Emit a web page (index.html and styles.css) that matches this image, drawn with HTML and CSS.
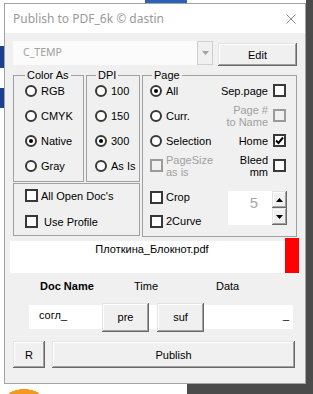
FILE: index.html
```html
<!DOCTYPE html>
<html lang="en">
<head>
<meta charset="UTF-8">
<title>Publish to PDF_6k</title>
<link rel="stylesheet" href="styles.css">
</head>
<body>
<div class="window">
  <div class="titlebar">
    <span class="title">Publish to PDF_6k © dastin</span>
    <svg class="close" width="10" height="10" viewBox="0 0 10 10"><path d="M0.5 0.5L9.5 9.5M9.5 0.5L0.5 9.5" stroke="#8a8a8a" stroke-width="1"/></svg>
  </div>

  <div class="content">
    <div class="top-row">
      <div class="combo">
        <span class="combo-text">C_TEMP</span>
        <span class="combo-btn"><svg width="7" height="4" viewBox="0 0 7 4"><path d="M0 0H7L3.5 4Z" fill="#a0a0a0"/></svg></span>
      </div>
      <button class="btn edit">Edit</button>
    </div>

    <div class="main">
      <div class="left-col">
        <div class="group-row">
          <fieldset class="group color-group">
            <legend>Color As</legend>
            <div class="opt-list">
              <div class="opt"><span class="radio"></span>RGB</div>
              <div class="opt"><span class="radio"></span>CMYK</div>
              <div class="opt"><span class="radio on"></span>Native</div>
              <div class="opt"><span class="radio"></span>Gray</div>
            </div>
          </fieldset>
          <fieldset class="group dpi-group">
            <legend>DPI</legend>
            <div class="opt-list">
              <div class="opt"><span class="radio"></span>100</div>
              <div class="opt"><span class="radio"></span>150</div>
              <div class="opt"><span class="radio on"></span>300</div>
              <div class="opt"><span class="radio"></span>As Is</div>
            </div>
          </fieldset>
        </div>
        <div class="box">
          <div class="opt chk"><span class="check"></span>All Open Doc's</div>
          <div class="opt chk"><span class="check"></span><span class="pre-space"> Use Profile</span></div>
        </div>
      </div>

      <fieldset class="group page-group">
        <legend>Page</legend>
        <div class="opt-list">
          <div class="page-row">
            <div class="opt"><span class="radio on"></span>All</div>
            <div class="right-opt"><span>Sep.page</span><span class="check"></span></div>
          </div>
          <div class="page-row">
            <div class="opt"><span class="radio"></span>Curr.</div>
            <div class="right-opt off"><span class="two-line">Page #<br>to Name</span><span class="check"></span></div>
          </div>
          <div class="page-row">
            <div class="opt"><span class="radio"></span>Selection</div>
            <div class="right-opt"><span>Home</span><span class="check"><svg width="9" height="9" viewBox="0 0 9 9"><path d="M1 4.5L3.5 7L8 1.5" fill="none" stroke="#000" stroke-width="2"/></svg></span></div>
          </div>
          <div class="page-row">
            <div class="opt chk off"><span class="check"></span><span class="two-line">PageSize<br>as is</span></div>
            <div class="right-opt"><span class="two-line">Bleed<br>mm</span><span class="check"></span></div>
          </div>
        </div>
        <div class="page-bottom">
          <div class="bottom-list">
            <div class="opt chk"><span class="check"></span>Crop</div>
            <div class="opt chk"><span class="check"></span>2Curve</div>
          </div>
          <div class="spinner">
            <div class="spin-field">5</div>
            <div class="spin-btns">
              <div class="btn spin-btn"><svg width="7" height="4" viewBox="0 0 7 4"><path d="M0 4H7L3.5 0Z" fill="#000"/></svg></div>
              <div class="btn spin-btn"><svg width="7" height="4" viewBox="0 0 7 4"><path d="M0 0H7L3.5 4Z" fill="#000"/></svg></div>
            </div>
          </div>
        </div>
      </fieldset>
    </div>

    <div class="file-row">
      <div class="file-name">Плоткина_Блокнот.pdf</div>
      <div class="file-flag"></div>
    </div>

    <div class="labels">
      <span class="bold">Doc Name</span>
      <span>Time</span>
      <span>Data</span>
    </div>

    <div class="inputs">
      <div class="field doc-field">согл_</div>
      <button class="btn small">pre</button>
      <button class="btn small">suf</button>
      <div class="field data-field">_</div>
    </div>

    <div class="actions">
      <button class="btn r-btn">R</button>
      <button class="btn publish">Publish</button>
    </div>
  </div>
</div>
</body>
</html>
```

FILE: styles.css
```css
body {
  margin: 0;
  width: 313px;
  height: 394px;
  overflow: hidden;
  font-family: "Liberation Sans", Arial, sans-serif;
  font-size: 11px;
  color: #000;
  background:
    radial-gradient(ellipse 20px 12px at 24px 401px, #f39a1e 98%, transparent 100%) no-repeat,
    linear-gradient(#4b4b4b, #4b4b4b) 187px 384px / 126px 10px no-repeat,
    linear-gradient(#1d3f8f, #1d3f8f) 0 46px / 4px 22px no-repeat,
    linear-gradient(#1d3f8f, #1d3f8f) 0 88px / 4px 20px no-repeat,
    linear-gradient(#2a62b8, #2a62b8) 145px 0 / 42px 3px no-repeat,
    linear-gradient(to right, #fff 306px, #4b4b4b 306px);
}

/* dialog window */
.window {
  margin: 3px 0 0 4px;
  width: 302px;
  height: 381px;
  box-sizing: border-box;
  border: 1px solid #a3a3a3;
  background: #f0f0f0;
  display: flex;
  flex-direction: column;
}

.titlebar {
  height: 29px;
  flex-shrink: 0;
  background: #fff;
  display: flex;
  align-items: center;
  justify-content: space-between;
  padding: 0 9px 0 8px;
}

.title {
  font-family: "Noto Sans", "Open Sans", sans-serif;
  font-size: 12px;
  color: #999;
}

.content {
  padding: 0 8px;
  display: flex;
  flex-direction: column;
}

/* buttons, classic 3d look */
.btn {
  font-family: inherit;
  font-size: 11px;
  color: #000;
  background: #f0f0f0;
  border: none;
  padding: 0;
  box-sizing: border-box;
  box-shadow: inset -1px -1px #696969, inset 1px 1px #e3e3e3,
              inset -2px -2px #a0a0a0, inset 2px 2px #fff;
}

.top-row {
  margin-top: 8px;
  display: flex;
  align-items: flex-start;
}

.combo {
  width: 200px;
  height: 24px;
  background: #fbfbfb;
  display: flex;
  justify-content: space-between;
}

.combo-text {
  padding-left: 10px;
  line-height: 22px;
  color: #a0a0a0;
  font-family: "Noto Sans", sans-serif;
  font-size: 10.5px;
}

.combo-btn {
  width: 16px;
  box-sizing: border-box;
  border: 1px solid #cfcfcf;
  background: #f0f0f0;
  display: flex;
  align-items: center;
  justify-content: center;
}

.edit {
  margin: 2px 0 0 5px;
  width: 79px;
  height: 23px;
}

/* option groups */
.main {
  margin-top: 3px;
  display: grid;
  grid-template-columns: 127px 155px;
  gap: 2px;
}

.group-row {
  display: flex;
  gap: 2px;
}

.group {
  margin: 0;
  padding: 0 0 0 11px;
  border: 1px solid #a0a0a0;
  box-sizing: border-box;
  min-width: 0;
}

.group legend {
  padding: 0 2px;
  line-height: 12px;
}

.color-group {
  width: 71px;
  height: 113px;
}

.dpi-group {
  width: 54px;
  height: 113px;
  padding-left: 8px;
}

.dpi-group legend {
  margin-left: 1px;
}

.page-group {
  height: 168px;
  padding: 0 10px 0 7px;
}

.page-group legend {
  margin-left: 2px;
}

.opt-list {
  margin-top: -3px;
}

.opt {
  display: flex;
  align-items: center;
  gap: 4px;
  height: 25px;
}

.opt.chk {
  gap: 3px;
}

.radio {
  width: 12px;
  height: 12px;
  box-sizing: border-box;
  border: 2px solid #383838;
  border-radius: 50%;
  background: #fff;
  display: flex;
  align-items: center;
  justify-content: center;
  flex-shrink: 0;
}

.radio.on::after {
  content: "";
  width: 4px;
  height: 4px;
  border-radius: 50%;
  background: #000;
}

.check {
  width: 13px;
  height: 13px;
  box-sizing: border-box;
  border: 2px solid #383838;
  background: #fff;
  display: flex;
  align-items: center;
  justify-content: center;
  flex-shrink: 0;
}

.off {
  color: #a0a0a0;
}

.off .check {
  border-color: #9a9a9a;
  background: #f0f0f0;
}

.two-line {
  line-height: 12px;
}

.pre-space {
  white-space: pre;
}

.left-col {
  display: flex;
  flex-direction: column;
}

.box {
  margin-top: 1px;
  height: 53px;
  box-sizing: border-box;
  border: 1px solid #a0a0a0;
  padding-left: 11px;
  display: flex;
  flex-direction: column;
  gap: 3px;
}

.box .opt {
  height: 23px;
}

.page-row {
  height: 25px;
  display: flex;
  align-items: center;
  justify-content: space-between;
}

.right-opt {
  display: flex;
  align-items: center;
  gap: 5px;
  text-align: right;
}

.page-bottom {
  margin-top: 7px;
  display: flex;
  justify-content: space-between;
  align-items: flex-start;
}

.bottom-list .opt {
  height: 24px;
}

.spinner {
  margin: 6px -1px 0 0;
  display: flex;
}

.spin-field {
  width: 44px;
  height: 34px;
  box-sizing: border-box;
  background: #fff;
  color: #a8a8a8;
  font-size: 15px;
  line-height: 18px;
  padding: 3px 0 0 8px;
  text-align: center;
}

.spin-btns {
  display: flex;
  flex-direction: column;
}

.spin-btn {
  width: 15px;
  height: 17px;
  display: flex;
  align-items: center;
  justify-content: center;
}

/* file name strip */
.file-row {
  margin: 1px -2px 0 -3px;
  display: flex;
  align-items: flex-end;
}

.file-name {
  flex: 1;
  height: 32px;
  box-sizing: border-box;
  background: #fff;
  padding: 1px 0 0 9px;
  line-height: 14px;
  text-align: center;
}

.file-flag {
  width: 14px;
  height: 35px;
  background: #ff0000;
}

.labels {
  margin-top: 6px;
  padding-left: 27px;
  line-height: 14px;
  display: grid;
  grid-template-columns: 94px 82px auto;
}

.bold {
  font-weight: bold;
}

.inputs {
  margin: 12px 4px 0 16px;
  height: 24px;
  background: #fff;
  display: flex;
  align-items: center;
}

.field {
  align-self: flex-start;
  padding-top: 3px;
  line-height: 14px;
}

.doc-field {
  width: 73px;
  box-sizing: border-box;
  padding-left: 10px;
}

.small {
  width: 47px;
  height: 29px;
}

.small + .small {
  margin-left: 8px;
}

.data-field {
  flex: 1;
  text-align: right;
  padding-right: 4px;
}

.actions {
  margin-top: 12px;
  display: flex;
  gap: 7px;
}

.r-btn {
  width: 32px;
  height: 27px;
}

.publish {
  flex: 1;
  height: 27px;
  margin-right: 2px;
}
```
